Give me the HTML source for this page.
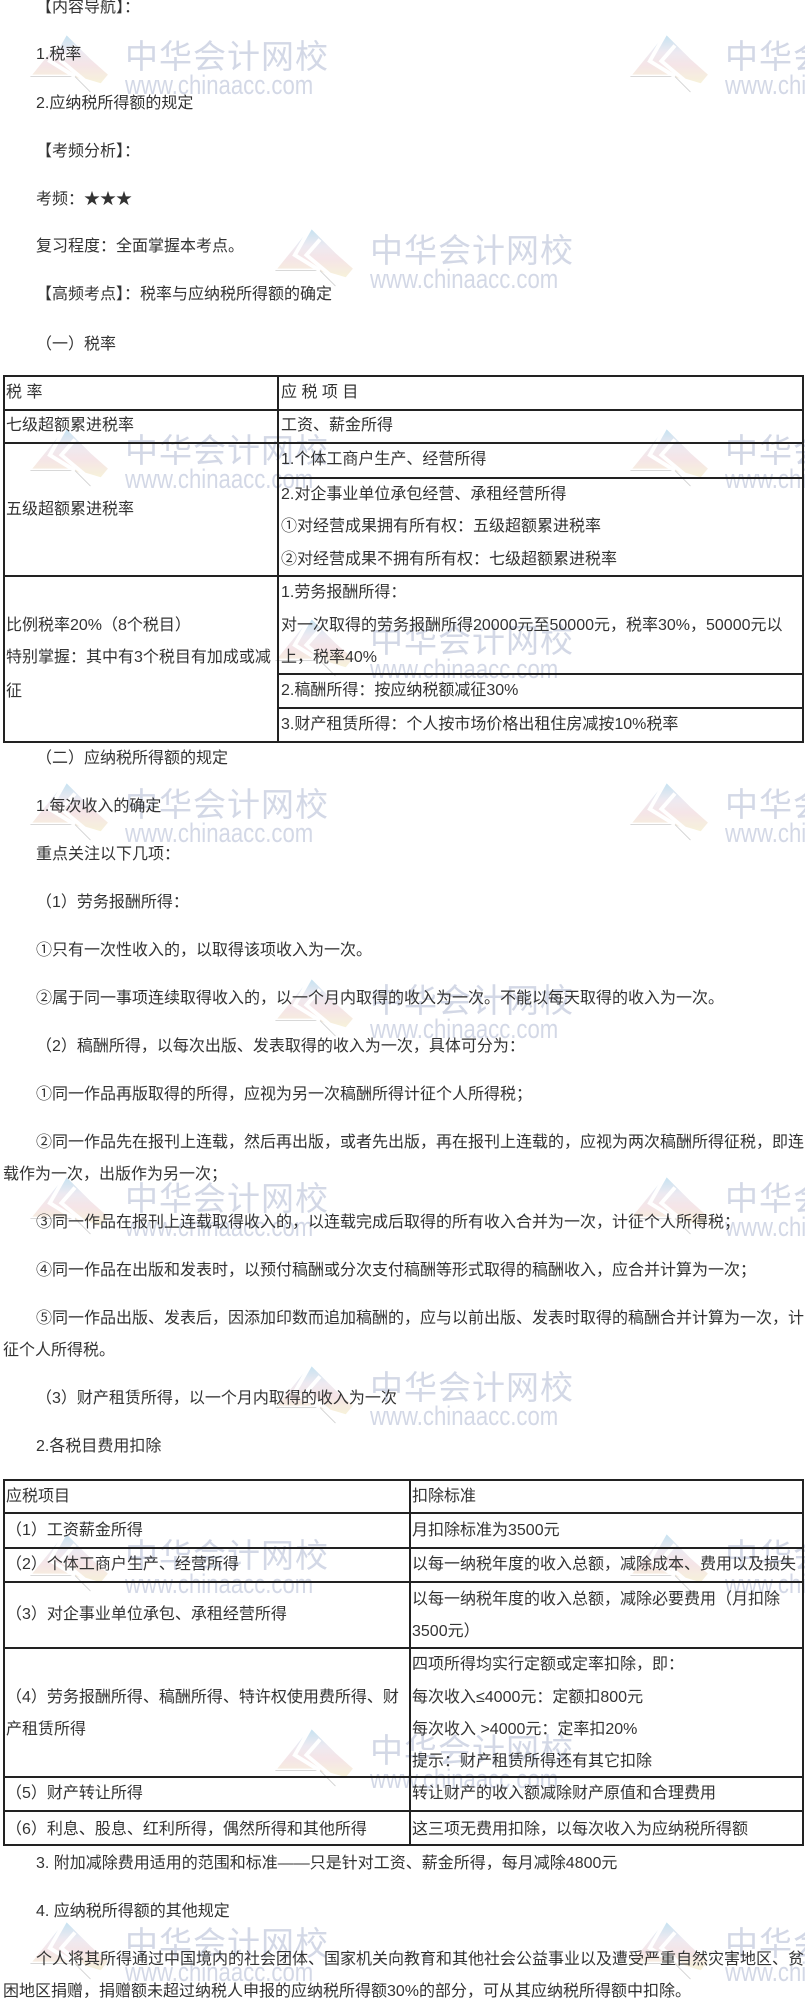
<!DOCTYPE html>
<html><head><meta charset="utf-8">
<style>
*{margin:0;padding:0;box-sizing:border-box}
body{width:805px;height:2002px;position:relative;overflow:hidden;background:#fff;font-family:"Liberation Sans","Noto Sans CJK SC",sans-serif;color:#333;font-size:16px}
.t{position:absolute;white-space:nowrap;line-height:32px;height:32px;z-index:10}
.wm{position:absolute;width:300px;height:70px;z-index:1;pointer-events:none}
.wm .c{position:absolute;left:95px;top:0;font-size:33px;line-height:36px;color:#d3d8e6;font-family:"Noto Sans CJK SC",sans-serif;letter-spacing:1px;white-space:nowrap}
.wm .w{position:absolute;left:95px;top:34px;font-size:27px;line-height:30px;color:#d3d8e6;font-family:"Liberation Sans",sans-serif;transform:scaleX(.82);transform-origin:left;white-space:nowrap}
.wm svg{position:absolute;left:0;top:-4px;opacity:.8}
.h{position:absolute;height:2px;background:#222;z-index:10}
.v{position:absolute;width:2px;background:#222;z-index:10}
</style></head><body>

<div class="t" style="left:36px;top:-8px">【内容导航】：</div>
<div class="t" style="left:36px;top:39px">1.税率</div>
<div class="t" style="left:36px;top:88px">2.应纳税所得额的规定</div>
<div class="t" style="left:36px;top:136px">【考频分析】：</div>
<div class="t" style="left:36px;top:184px">考频：★★★</div>
<div class="t" style="left:36px;top:231px">复习程度：全面掌握本考点。</div>
<div class="t" style="left:36px;top:279px">【高频考点】：税率与应纳税所得额的确定</div>
<div class="t" style="left:36px;top:329px">（一）税率</div>

<div class="h" style="left:3px;width:801px;top:375px"></div>
<div class="h" style="left:3px;width:801px;top:409px"></div>
<div class="h" style="left:3px;width:801px;top:442px"></div>
<div class="h" style="left:278px;width:526px;top:477px"></div>
<div class="h" style="left:3px;width:801px;top:575px"></div>
<div class="h" style="left:278px;width:526px;top:673px"></div>
<div class="h" style="left:278px;width:526px;top:707px"></div>
<div class="h" style="left:3px;width:801px;top:741px"></div>
<div class="v" style="left:3px;top:375px;height:368px"></div>
<div class="v" style="left:277px;top:375px;height:368px"></div>
<div class="v" style="left:802px;top:375px;height:368px"></div>

<div class="t" style="left:6px;top:377px">税 率</div>
<div class="t" style="left:281px;top:377px">应 税 项 目</div>
<div class="t" style="left:6px;top:410px">七级超额累进税率</div>
<div class="t" style="left:281px;top:410px">工资、薪金所得</div>
<div class="t" style="left:281px;top:444px">1.个体工商户生产、经营所得</div>
<div class="t" style="left:6px;top:494px">五级超额累进税率</div>
<div class="t" style="left:281px;top:479px">2.对企事业单位承包经营、承租经营所得</div>
<div class="t" style="left:281px;top:511px">①对经营成果拥有所有权：五级超额累进税率</div>
<div class="t" style="left:281px;top:544px">②对经营成果不拥有所有权：七级超额累进税率</div>
<div class="t" style="left:6px;top:610px">比例税率20%（8个税目）</div>
<div class="t" style="left:6px;top:642px">特别掌握：其中有3个税目有加成或减</div>
<div class="t" style="left:6px;top:676px">征</div>
<div class="t" style="left:281px;top:577px">1.劳务报酬所得：</div>
<div class="t" style="left:281px;top:610px">对一次取得的劳务报酬所得20000元至50000元，税率30%，50000元以</div>
<div class="t" style="left:281px;top:642px">上，税率40%</div>
<div class="t" style="left:281px;top:675px">2.稿酬所得：按应纳税额减征30%</div>
<div class="t" style="left:281px;top:709px">3.财产租赁所得：个人按市场价格出租住房减按10%税率</div>

<div class="t" style="left:36px;top:743px">（二）应纳税所得额的规定</div>
<div class="t" style="left:36px;top:791px">1.每次收入的确定</div>
<div class="t" style="left:36px;top:839px">重点关注以下几项：</div>
<div class="t" style="left:36px;top:887px">（1）劳务报酬所得：</div>
<div class="t" style="left:36px;top:935px">①只有一次性收入的，以取得该项收入为一次。</div>
<div class="t" style="left:36px;top:983px">②属于同一事项连续取得收入的，以一个月内取得的收入为一次。不能以每天取得的收入为一次。</div>
<div class="t" style="left:36px;top:1031px">（2）稿酬所得，以每次出版、发表取得的收入为一次，具体可分为：</div>
<div class="t" style="left:36px;top:1079px">①同一作品再版取得的所得，应视为另一次稿酬所得计征个人所得税；</div>
<div class="t" style="left:36px;top:1127px">②同一作品先在报刊上连载，然后再出版，或者先出版，再在报刊上连载的，应视为两次稿酬所得征税，即连</div>
<div class="t" style="left:3px;top:1159px">载作为一次，出版作为另一次；</div>
<div class="t" style="left:36px;top:1207px">③同一作品在报刊上连载取得收入的，以连载完成后取得的所有收入合并为一次，计征个人所得税；</div>
<div class="t" style="left:36px;top:1255px">④同一作品在出版和发表时，以预付稿酬或分次支付稿酬等形式取得的稿酬收入，应合并计算为一次；</div>
<div class="t" style="left:36px;top:1303px">⑤同一作品出版、发表后，因添加印数而追加稿酬的，应与以前出版、发表时取得的稿酬合并计算为一次，计</div>
<div class="t" style="left:3px;top:1335px">征个人所得税。</div>
<div class="t" style="left:36px;top:1383px">（3）财产租赁所得，以一个月内取得的收入为一次</div>
<div class="t" style="left:36px;top:1431px">2.各税目费用扣除</div>

<div class="h" style="left:3px;width:801px;top:1479px"></div>
<div class="h" style="left:3px;width:801px;top:1512px"></div>
<div class="h" style="left:3px;width:801px;top:1547px"></div>
<div class="h" style="left:3px;width:801px;top:1581px"></div>
<div class="h" style="left:3px;width:801px;top:1647px"></div>
<div class="h" style="left:3px;width:801px;top:1776px"></div>
<div class="h" style="left:3px;width:801px;top:1810px"></div>
<div class="h" style="left:3px;width:801px;top:1844px"></div>
<div class="v" style="left:3px;top:1479px;height:367px"></div>
<div class="v" style="left:409px;top:1479px;height:367px"></div>
<div class="v" style="left:802px;top:1479px;height:367px"></div>

<div class="t" style="left:6px;top:1481px">应税项目</div>
<div class="t" style="left:412px;top:1481px">扣除标准</div>
<div class="t" style="left:6px;top:1515px">（1）工资薪金所得</div>
<div class="t" style="left:412px;top:1515px">月扣除标准为3500元</div>
<div class="t" style="left:6px;top:1549px">（2）个体工商户生产、经营所得</div>
<div class="t" style="left:412px;top:1549px">以每一纳税年度的收入总额，减除成本、费用以及损失</div>
<div class="t" style="left:6px;top:1599px">（3）对企事业单位承包、承租经营所得</div>
<div class="t" style="left:412px;top:1584px">以每一纳税年度的收入总额，减除必要费用（月扣除</div>
<div class="t" style="left:412px;top:1616px">3500元）</div>
<div class="t" style="left:6px;top:1682px">（4）劳务报酬所得、稿酬所得、特许权使用费所得、财</div>
<div class="t" style="left:6px;top:1714px">产租赁所得</div>
<div class="t" style="left:412px;top:1649px">四项所得均实行定额或定率扣除，即：</div>
<div class="t" style="left:412px;top:1682px">每次收入≤4000元：定额扣800元</div>
<div class="t" style="left:412px;top:1714px">每次收入 &gt;4000元：定率扣20%</div>
<div class="t" style="left:412px;top:1746px">提示：财产租赁所得还有其它扣除</div>
<div class="t" style="left:6px;top:1778px">（5）财产转让所得</div>
<div class="t" style="left:412px;top:1778px">转让财产的收入额减除财产原值和合理费用</div>
<div class="t" style="left:6px;top:1814px">（6）利息、股息、红利所得，偶然所得和其他所得</div>
<div class="t" style="left:412px;top:1814px">这三项无费用扣除，以每次收入为应纳税所得额</div>

<div class="t" style="left:36px;top:1848px">3. 附加减除费用适用的范围和标准——只是针对工资、薪金所得，每月减除4800元</div>
<div class="t" style="left:36px;top:1896px">4. 应纳税所得额的其他规定</div>
<div class="t" style="left:36px;top:1944px">个人将其所得通过中国境内的社会团体、国家机关向教育和其他社会公益事业以及遭受严重自然灾害地区、贫</div>
<div class="t" style="left:3px;top:1976px">困地区捐赠，捐赠额未超过纳税人申报的应纳税所得额30%的部分，可从其应纳税所得额中扣除。</div>

<svg width="0" height="0" style="position:absolute"><defs>
<linearGradient id="g" x1="0" y1="0" x2="0" y2="1">
<stop offset="0" stop-color="#a8d4ec"/><stop offset=".35" stop-color="#e6e0ea"/><stop offset=".6" stop-color="#f1d9dc"/><stop offset="1" stop-color="#f4efc6"/></linearGradient>
<symbol id="lg" viewBox="0 0 90 64">
<polygon points="2,44 36,2 62,28 80,44 70,56 40,44" fill="url(#g)" opacity=".85"/>
<polyline points="0,46 46,46 62,62" fill="none" stroke="#c8c8c8" stroke-width="1"/>
<polyline points="36,2 20,30 46,46" fill="none" stroke="#fff" stroke-width="4"/>
<polyline points="46,14 32,30 56,50 76,56" fill="none" stroke="#fff" stroke-width="4"/>
</symbol></defs></svg>

<div class="wm" style="left:30px;top:36px"><svg width="88" height="62"><use href="#lg"/></svg><div class="c">中华会计网校</div><div class="w">www.chinaacc.com</div></div>
<div class="wm" style="left:630px;top:36px"><svg width="88" height="62"><use href="#lg"/></svg><div class="c">中华会计网校</div><div class="w">www.chinaacc.com</div></div>
<div class="wm" style="left:275px;top:230px"><svg width="88" height="62"><use href="#lg"/></svg><div class="c">中华会计网校</div><div class="w">www.chinaacc.com</div></div>
<div class="wm" style="left:30px;top:430px"><svg width="88" height="62"><use href="#lg"/></svg><div class="c">中华会计网校</div><div class="w">www.chinaacc.com</div></div>
<div class="wm" style="left:630px;top:430px"><svg width="88" height="62"><use href="#lg"/></svg><div class="c">中华会计网校</div><div class="w">www.chinaacc.com</div></div>
<div class="wm" style="left:275px;top:620px"><svg width="88" height="62"><use href="#lg"/></svg><div class="c">中华会计网校</div><div class="w">www.chinaacc.com</div></div>
<div class="wm" style="left:30px;top:784px"><svg width="88" height="62"><use href="#lg"/></svg><div class="c">中华会计网校</div><div class="w">www.chinaacc.com</div></div>
<div class="wm" style="left:630px;top:784px"><svg width="88" height="62"><use href="#lg"/></svg><div class="c">中华会计网校</div><div class="w">www.chinaacc.com</div></div>
<div class="wm" style="left:275px;top:980px"><svg width="88" height="62"><use href="#lg"/></svg><div class="c">中华会计网校</div><div class="w">www.chinaacc.com</div></div>
<div class="wm" style="left:30px;top:1178px"><svg width="88" height="62"><use href="#lg"/></svg><div class="c">中华会计网校</div><div class="w">www.chinaacc.com</div></div>
<div class="wm" style="left:630px;top:1178px"><svg width="88" height="62"><use href="#lg"/></svg><div class="c">中华会计网校</div><div class="w">www.chinaacc.com</div></div>
<div class="wm" style="left:275px;top:1367px"><svg width="88" height="62"><use href="#lg"/></svg><div class="c">中华会计网校</div><div class="w">www.chinaacc.com</div></div>
<div class="wm" style="left:30px;top:1535px"><svg width="88" height="62"><use href="#lg"/></svg><div class="c">中华会计网校</div><div class="w">www.chinaacc.com</div></div>
<div class="wm" style="left:630px;top:1535px"><svg width="88" height="62"><use href="#lg"/></svg><div class="c">中华会计网校</div><div class="w">www.chinaacc.com</div></div>
<div class="wm" style="left:275px;top:1730px"><svg width="88" height="62"><use href="#lg"/></svg><div class="c">中华会计网校</div><div class="w">www.chinaacc.com</div></div>
<div class="wm" style="left:30px;top:1923px"><svg width="88" height="62"><use href="#lg"/></svg><div class="c">中华会计网校</div><div class="w">www.chinaacc.com</div></div>
<div class="wm" style="left:630px;top:1923px"><svg width="88" height="62"><use href="#lg"/></svg><div class="c">中华会计网校</div><div class="w">www.chinaacc.com</div></div>

</body></html>
